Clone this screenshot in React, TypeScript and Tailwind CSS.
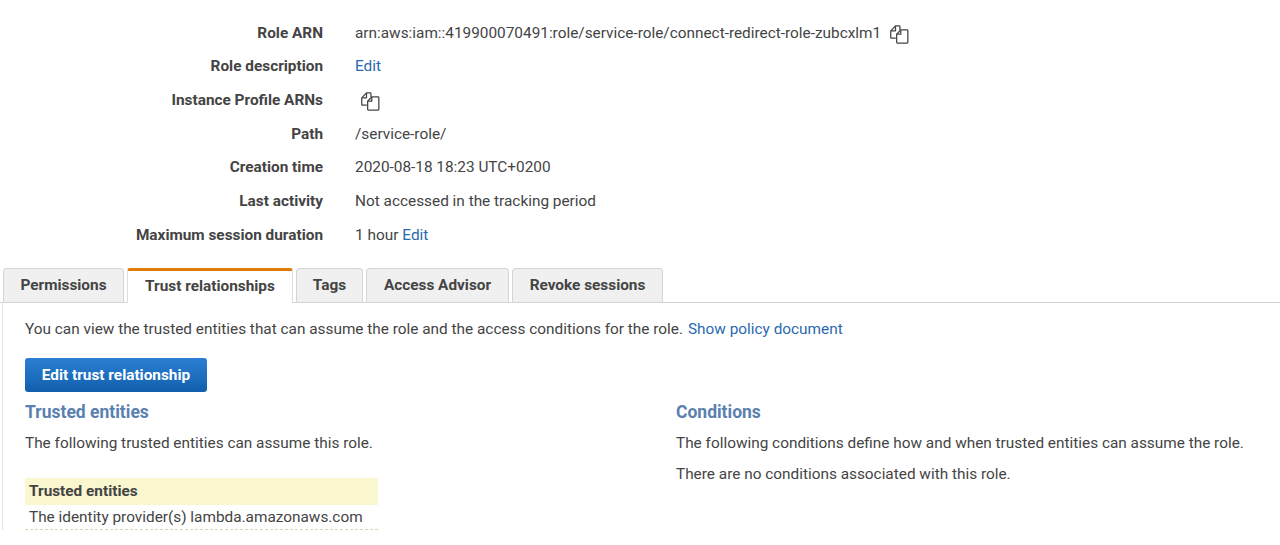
const CopyIcon = ({ className = '' }: { className?: string }) => (
  <svg viewBox="0 0 18 18" className={`h-[19px] w-[19px] ${className}`} fill="none" stroke="#444" strokeWidth="1.2" strokeLinejoin="round">
    <path d="M5.5 12.5H1.4c-.4 0-.7-.3-.7-.7V5.6L5.2.8h3.5c.4 0 .7.3.7.7v3.2" />
    <path d="M5.2 1v4.5H.9" />
    <path d="M6.3 8.6 10.2 4.7h6c.4 0 .7.3.7.7v11c0 .4-.3.7-.7.7H7c-.4 0-.7-.3-.7-.7V8.6z" fill="#fff" />
    <path d="M10.2 4.9v3.8H6.4" />
  </svg>
);

const Row = ({ label, children }: { label: string; children?: React.ReactNode }) => (
  <div className="flex h-[33.7px] items-center">
    <div className="w-[323px] shrink-0 text-right font-bold text-[#444]">{label}</div>
    <div className="ml-8 flex items-center text-[#444]">{children}</div>
  </div>
);

const Tab = ({ label, active = false, width }: { label: string; active?: boolean; width: string }) =>
  active ? (
    <div className={`-mb-px flex h-[35px] ${width} items-center justify-center rounded-t-[3px] border-x border-t-[3px] border-x-[#ddd] border-t-[#e07b0c] bg-white pb-[2px] font-bold text-[#444]`}>
      {label}
    </div>
  ) : (
    <div className={`flex h-[34px] ${width} items-center justify-center rounded-t-[4px] border-x border-t border-[#d5d5d5] bg-[#f0f0f0] font-bold text-[#444]`}>
      {label}
    </div>
  );

export default function App() {
  return (
    <div className="h-[545px] w-[1280px] overflow-hidden bg-white font-['Roboto',sans-serif] text-[15.36px]">
      <div className="pt-[16.4px]">
        <Row label="Role ARN">
          arn:aws:iam::419900070491:role/service-role/connect-redirect-role-zubcxlm1
          <CopyIcon className="ml-[9px] mt-0.5" />
        </Row>
        <Row label="Role description">
          <span className="text-[#2a6ab0]">Edit</span>
        </Row>
        <Row label="Instance Profile ARNs">
          <CopyIcon className="ml-[6px] mt-0.5" />
        </Row>
        <Row label="Path">/service-role/</Row>
        <Row label="Creation time">2020-08-18 18:23 UTC+0200</Row>
        <Row label="Last activity">Not accessed in the tracking period</Row>
        <Row label="Maximum session duration">
          1 hour<span className="ml-[4px] text-[#2a6ab0]">Edit</span>
        </Row>
      </div>

      <div className="mt-[16.1px] flex gap-[3px] border-b border-[#d5d5d5] pl-[3px]">
        <Tab label="Permissions" width="w-[121px]" />
        <Tab label="Trust relationships" width="w-[166px]" active />
        <Tab label="Tags" width="w-[67px]" />
        <Tab label="Access Advisor" width="w-[143px]" />
        <Tab label="Revoke sessions" width="w-[151px]" />
      </div>

      <div className="ml-[2px] border-l border-[#e5e5e5] pl-[22px] text-[#444]">
        <div className="flex h-[55px] items-center pb-[2px]">
          You can view the trusted entities that can assume the role and the access conditions for the role.
          <span className="ml-[5px] text-[#2a6ab0]">Show policy document</span>
        </div>
        <button className="flex h-[34px] w-[182px] items-center justify-center rounded-[3px] bg-gradient-to-b from-[#2b7fd3] to-[#1160ae] font-bold text-white">
          Edit trust relationship
        </button>
        <div className="mt-[8px] grid grid-cols-[651px_1fr]">
          <div>
            <div className="text-[17.5px] leading-[24px] font-bold text-[#5a80b0]">Trusted entities</div>
            <div className="mt-[7px] leading-[24px]">The following trusted entities can assume this role.</div>
            <div className="mt-[23px] w-[353px]">
              <div className="flex h-[27px] items-center bg-[#faf6d0] pl-[4px] font-bold text-[#444]">Trusted entities</div>
              <div className="flex h-[25px] items-center border-b border-dashed border-[#d5d5b0] pl-[4px] pt-[1px]">
                The identity provider(s) lambda.amazonaws.com
              </div>
            </div>
          </div>
          <div>
            <div className="text-[17.5px] leading-[24px] font-bold text-[#5a80b0]">Conditions</div>
            <div className="mt-[7px] leading-[24px]">The following conditions define how and when trusted entities can assume the role.</div>
            <div className="mt-[7px] leading-[24px]">There are no conditions associated with this role.</div>
          </div>
        </div>
      </div>
    </div>
  );
}
